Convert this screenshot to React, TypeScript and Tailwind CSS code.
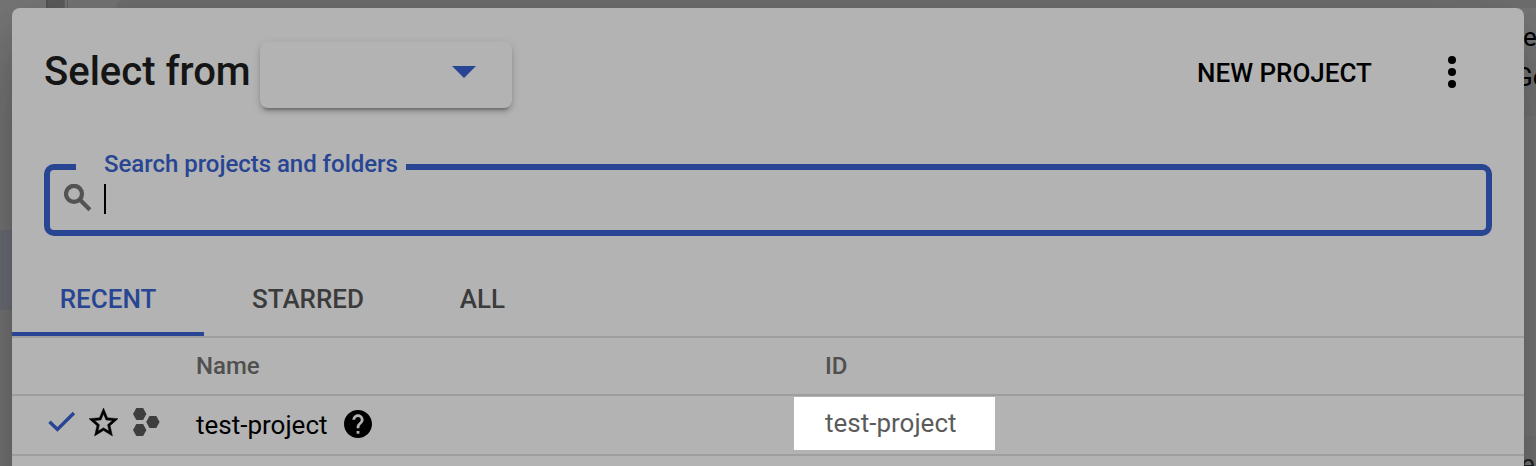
import type { ReactNode } from "react";

function SearchIcon() {
  return (
    <svg width="28" height="28" viewBox="0 0 28 28" fill="none" stroke="#535353" strokeWidth="4.2">
      <circle cx="10" cy="9.8" r="8" />
      <path d="M15.2 15 25.9 25.7" />
    </svg>
  );
}

function CheckIcon() {
  return (
    <svg width="28" height="22" viewBox="0 0 28 22" fill="none" stroke="#284593" strokeWidth="3.5">
      <path d="M1.5 10.8 9.4 18.4 25.9 2" />
    </svg>
  );
}

function StarIcon() {
  return (
    <svg
      width="29"
      height="28"
      viewBox="2 2 20 19"
      preserveAspectRatio="none"
      fill="#000000"
      stroke="#000000"
      strokeWidth="0.3"
      className="overflow-visible"
    >
      <path d="M22 9.24l-7.19-.62L12 2 9.19 8.63 2 9.24l5.46 4.73L5.82 21 12 17.27 18.18 21l-1.63-7.03L22 9.24zM12 15.4l-3.76 2.27 1-4.28-3.32-2.88 4.38-.38L12 6.1l1.71 4.04 4.38.38-3.32 2.88 1 4.28L12 15.4z" />
    </svg>
  );
}

function ProjectIcon() {
  return (
    <svg width="28" height="28" viewBox="0 0 28 28" fill="#3e3e3e">
      <path d="M3.3 0h6.8l3.3 6-3.3 6H3.3L0 6zM3.3 16h6.8l3.3 6-3.3 6H3.3L0 22zM16.5 8h6.8l3.3 6-3.3 6h-6.8l-3.3-6z" />
    </svg>
  );
}

function HelpIcon() {
  return (
    <svg width="28" height="28" viewBox="2 2 20 20" fill="#000000">
      <path d="M12 2C6.48 2 2 6.48 2 12s4.48 10 10 10 10-4.48 10-10S17.52 2 12 2zm1 17h-2v-2h2v2zm2.07-7.75l-.9.92C13.45 12.9 13 13.5 13 15h-2v-.5c0-1.1.45-2.1 1.17-2.83l1.24-1.26c.37-.36.59-.86.59-1.41 0-1.1-.9-2-2-2s-2 .9-2 2H8c0-2.21 1.79-4 4-4s4 1.79 4 4c0 .88-.36 1.68-.93 2.25z" />
    </svg>
  );
}

function Tab({ children, active, className }: { children: ReactNode; active?: boolean; className: string }) {
  return (
    <button
      className={`flex h-full items-center justify-center border-b-4 pt-1 text-[26px] font-medium leading-none ${
        active ? "border-[#284593] text-[#284593]" : "border-transparent text-[#3b3b3b]"
      } ${className}`}
    >
      {children}
    </button>
  );
}

function Backdrop() {
  return (
    <div className="absolute inset-0 overflow-hidden bg-[#777777]">
      <div className="flex h-2">
        <div className="w-[46px] bg-[#777777]" />
        <div className="w-[18px] border-l-2 border-[#555555] bg-[#5d5d5d]" />
        <div className="w-1 border-x border-[#656565] bg-[#777777]" />
        <div className="w-12 bg-[#777777]" />
        <div className="grow rounded-tl-lg bg-[#707070]" />
      </div>
      <div className="absolute left-0 top-[230px] h-20 w-3 bg-[#6e7078]" />
      <div className="absolute right-0 top-[116px] h-80 w-3 bg-[#7b7b7b]" />
      <span className="absolute left-[1523px] top-[22px] text-[26px] leading-[30px] text-black">e</span>
      <span className="absolute left-[1515px] top-[62px] text-[26px] leading-[30px] text-black">Go</span>
      <span className="absolute left-[1521px] top-[449px] text-[26px] leading-[30px] text-[#222222]">e</span>
    </div>
  );
}

export default function App() {
  return (
    <div className="relative h-[466px] w-[1536px] overflow-hidden px-3 pt-2 font-['Roboto',sans-serif]">
      <Backdrop />
      <main className="relative flex h-[600px] flex-col rounded-t-lg bg-[#b3b3b3] shadow-[0_22px_30px_-14px_rgba(0,0,0,0.2),0_48px_76px_6px_rgba(0,0,0,0.14),0_18px_92px_16px_rgba(0,0,0,0.12)]">
        <header className="flex h-[156px] items-start pl-8 pt-[34px]">
          <h1 className="w-[216px] whitespace-nowrap text-[40px] font-medium leading-[60px] text-[#151515]">
            Select from
          </h1>
          <button
            aria-label="Organization"
            className="flex h-[66px] w-[252px] items-start justify-end rounded-lg bg-[#b3b3b3] pr-9 pt-6 shadow-[0_6px_2px_-4px_rgba(0,0,0,0.2),0_4px_4px_0_rgba(0,0,0,0.14),0_2px_10px_0_rgba(0,0,0,0.12)]"
          >
            <svg width="24" height="12" viewBox="0 0 24 12" fill="#284593">
              <path d="M0 0h24L12 12z" />
            </svg>
          </button>
          <button className="ml-auto w-[175px] whitespace-nowrap text-left text-[26px] font-medium leading-[62px] text-black">
            NEW PROJECT
          </button>
          <button aria-label="More" className="ml-[76px] mr-[68px] flex flex-col gap-1 pt-[14px]">
            <i className="size-2 rounded-full bg-black" />
            <i className="size-2 rounded-full bg-black" />
            <i className="size-2 rounded-full bg-black" />
          </button>
        </header>

        <div className="relative mx-8 flex h-[72px] items-start rounded-[10px] border-[6px] border-[#284593] pl-[14px] pt-[14px]">
          <label className="absolute -top-5 left-[26px] h-7 w-[329.5px] whitespace-nowrap bg-[#b3b3b3] pl-7 text-[24px] font-medium leading-7 tracking-[-0.03px] text-[#284593]">
            Search projects and folders
          </label>
          <SearchIcon />
          <span className="ml-3 h-[30px] w-0.5 bg-black" />
        </div>

        <nav className="mt-[26px] flex h-[76px] shrink-0 border-b-2 border-[#9e9e9e]">
          <Tab active className="w-[192px]">RECENT</Tab>
          <Tab className="w-[208px]">STARRED</Tab>
          <Tab className="w-[141px]">ALL</Tab>
        </nav>

        <div className="flex h-[58px] items-center border-b-2 border-[#9e9e9e] pl-[184px] text-[24px] font-medium text-[#505050]">
          <span className="w-[629px]">Name</span>
          <span>ID</span>
        </div>

        <div className="flex h-[60px] items-start border-b-2 border-[#9e9e9e] pl-9">
          <div className="flex w-[148px] items-start">
            <div className="pt-[15px]"><CheckIcon /></div>
            <div className="ml-[13px] pt-3"><StarIcon /></div>
            <div className="ml-[15px] pt-3"><ProjectIcon /></div>
          </div>
          <div className="flex w-[598px] items-start text-[26px] leading-[58px] text-black">
            <span className="w-[148px]">test-project</span>
            <div className="pt-[14px]"><HelpIcon /></div>
          </div>
          <div className="mt-px h-[53px] w-[201px] bg-white pl-[31px] text-[26px] leading-[53px] text-[#5b5b5b]">
            test-project
          </div>
        </div>
      </main>
    </div>
  );
}
